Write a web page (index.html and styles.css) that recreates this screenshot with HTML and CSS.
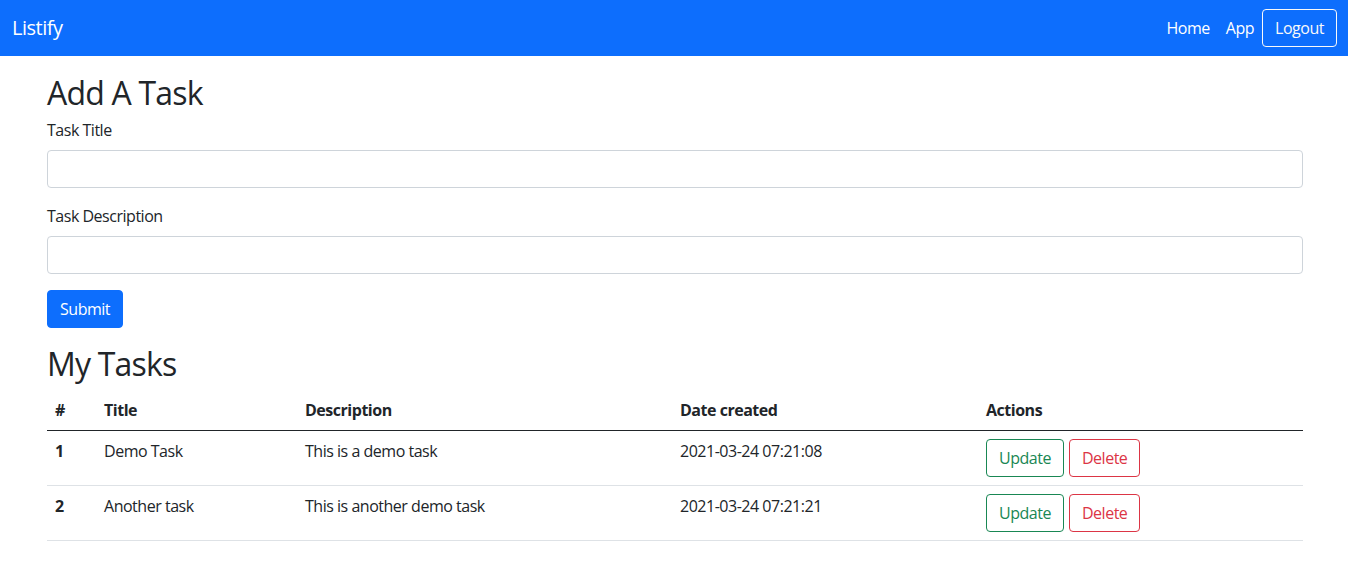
FILE: index.html
```html
<!DOCTYPE html>
<html lang="en">
<head>
<meta charset="utf-8">
<title>Listify</title>
<link rel="stylesheet" href="styles.css">
</head>
<body>
<nav class="navbar">
  <a class="brand" href="#">Listify</a>
  <div class="nav-right">
    <a class="nav-link" href="#">Home</a>
    <a class="nav-link" href="#">App</a>
    <button class="btn btn-outline-light">Logout</button>
  </div>
</nav>
<main class="container">
  <h2 class="heading">Add A Task</h2>
  <form class="task-form">
    <div class="field">
      <label class="label">Task Title</label>
      <input class="input" type="text">
    </div>
    <div class="field">
      <label class="label">Task Description</label>
      <input class="input" type="text">
    </div>
    <button type="button" class="btn btn-primary">Submit</button>
  </form>
  <h2 class="heading heading-tasks">My Tasks</h2>
  <table class="table">
    <colgroup>
      <col class="c1"><col class="c2"><col class="c3"><col class="c4"><col class="c5">
    </colgroup>
    <thead>
      <tr><th>#</th><th>Title</th><th>Description</th><th>Date created</th><th>Actions</th></tr>
    </thead>
    <tbody>
      <tr>
        <th>1</th><td>Demo Task</td><td>This is a demo task</td><td>2021-03-24 07:21:08</td>
        <td><div class="actions"><button class="btn btn-outline-success">Update</button><button class="btn btn-outline-danger">Delete</button></div></td>
      </tr>
      <tr>
        <th>2</th><td>Another task</td><td>This is another demo task</td><td>2021-03-24 07:21:21</td>
        <td><div class="actions"><button class="btn btn-outline-success">Update</button><button class="btn btn-outline-danger">Delete</button></div></td>
      </tr>
    </tbody>
  </table>
</main>
</body>
</html>
```
FILE: styles.css
```css
* { box-sizing: border-box; }
body {
  margin: 0;
  font-family: "Open Sans", "Noto Sans", "Liberation Sans", sans-serif;
  font-size: 16px;
  line-height: 1.5;
  letter-spacing: -0.03em;
  color: #212529;
  background: #fff;
}
.navbar {
  background: #0d6efd;
  height: 56px;
  padding: 0 11px 0 12px;
  display: flex;
  align-items: center;
  justify-content: space-between;
}
.brand {
  color: #fff;
  text-decoration: none;
  font-size: 20px;
  line-height: 30px;
}
.nav-right {
  display: flex;
  align-items: center;
}
.nav-link {
  color: #fff;
  text-decoration: none;
  padding: 8px;
}
.btn {
  display: inline-block;
  font-family: inherit;
  font-size: 16px;
  letter-spacing: inherit;
  line-height: 24px;
  padding: 6px 12px;
  border: 1px solid transparent;
  border-radius: 4px;
  background: transparent;
  cursor: pointer;
}
.btn-outline-light { color: #f8f9fa; border-color: #f8f9fa; }
.btn-primary { color: #fff; background: #0d6efd; border-color: #0d6efd; }
.btn-outline-success { color: #198754; border-color: #198754; }
.btn-outline-danger { color: #dc3545; border-color: #dc3545; }
.container {
  padding: 16px 45px 0 47px;
}
.heading {
  margin: 0 0 6px;
  padding-top: 2px;
  font-size: 32px;
  font-weight: 400;
  line-height: 1.2;
  letter-spacing: -0.025em;
}
.heading-tasks { margin-top: 15px; }
.field { margin-bottom: 16px; }
.label {
  display: inline-block;
  margin-bottom: 8px;
}
.input {
  display: block;
  width: 100%;
  height: 38px;
  padding: 6px 12px;
  font: inherit;
  border: 1px solid #ced4da;
  border-radius: 4px;
  background: #fff;
}
.table {
  width: 100%;
  border-collapse: collapse;
  table-layout: fixed;
}
.c1 { width: 49px; }
.c2 { width: 201px; }
.c3 { width: 375px; }
.c4 { width: 306px; }
.table th, .table td {
  padding: 8px;
  text-align: left;
  vertical-align: top;
  border-bottom: 1px solid #dee2e6;
}
.table thead th {
  border-bottom-color: #212529;
  vertical-align: bottom;
}
.table th { font-weight: 700; }
.actions {
  display: flex;
  gap: 5px;
}
```
